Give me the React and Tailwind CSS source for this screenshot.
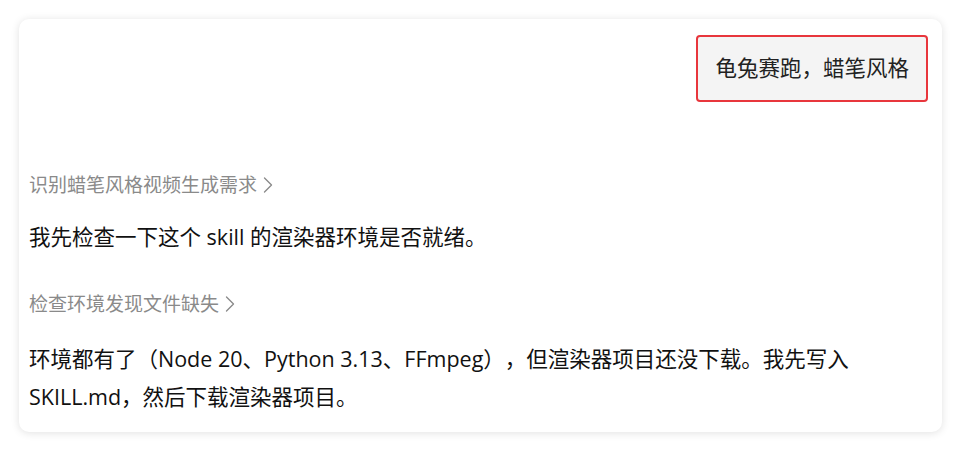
import React from "react";
import { ChevronRight } from "lucide-react";

const StepHeader = ({ text }) => (
  <div className="flex items-center text-[19px] leading-[28px] text-[#8a8a8a]">
    <span>{text}</span>
    <ChevronRight size={28} strokeWidth={1.15} className="-ml-[3px] text-[#8a8a8a]" />
  </div>
);

const App = () => {
  return (
    <div
      className="w-[960px] h-[450px] bg-white pt-[19px] pl-[19px] [text-spacing-trim:space-all]"
      style={{ fontFamily: '"Open Sans", "Noto Sans CJK SC", sans-serif' }}
    >
      <div className="w-[923px] h-[413px] bg-white rounded-[10px] shadow-[0_1px_8px_rgba(0,0,0,0.12)] pl-[10px] pr-[14px] pt-[16px]">
        <div className="flex justify-end">
          <div className="bg-[#f4f4f4] border-2 border-[#e8363c] rounded-[4px] h-[67px] px-[17px] flex items-center text-[21.5px] text-[#222]">
            龟兔赛跑，蜡笔风格
          </div>
        </div>

        <div className="mt-[69px]">
          <StepHeader text="识别蜡笔风格视频生成需求" />
        </div>

        <p className="mt-[22px] text-[21.5px] leading-[32px] text-[#111]">
          我先检查一下这个 skill 的渲染器环境是否就绪。
        </p>

        <div className="mt-[37px]">
          <StepHeader text="检查环境发现文件缺失" />
        </div>

        <p className="mt-[22px] text-[21.5px] leading-[38px] text-[#111] w-[870px]">
          环境都有了（Node 20、Python 3.13、FFmpeg），但渲染器项目还没下载。我先写入 SKILL.md，然后下载渲染器项目。
        </p>
      </div>
    </div>
  );
};

export default App;
